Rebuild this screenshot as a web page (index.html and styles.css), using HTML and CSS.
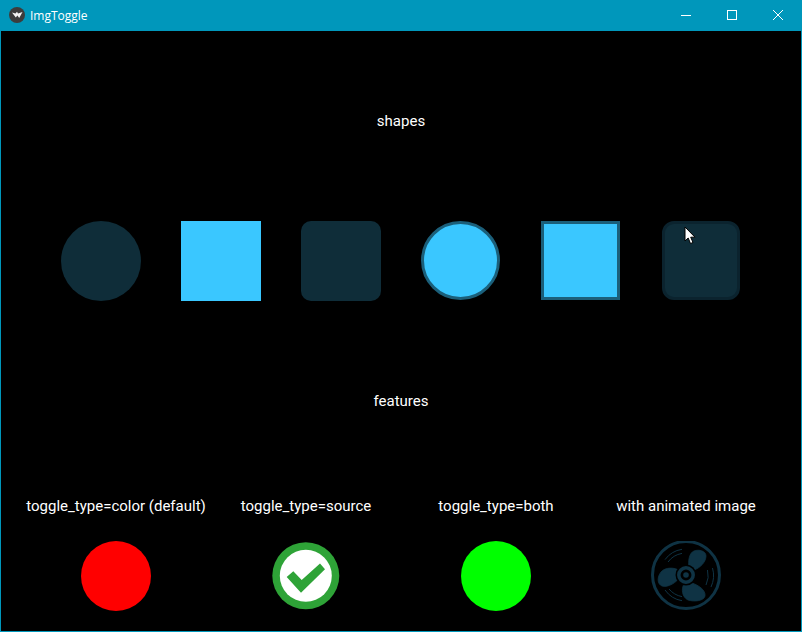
FILE: index.html
```html
<!DOCTYPE html>
<html lang="en">
<head>
<meta charset="utf-8">
<title>ImgToggle</title>
<link rel="stylesheet" href="styles.css">
</head>
<body>
<div class="window">
  <header class="titlebar">
    <svg class="app-icon" width="16" height="16" viewBox="0 0 16 16">
      <circle cx="8" cy="8" r="8" fill="#3c3c3c"/>
      <path d="M3 5.5 L6.5 6.5 L8 4.8 L9 6.4 L13.5 5 L10.2 11 L8.4 8.6 L6.8 10.6 Z" fill="#f4f4f4"/>
    </svg>
    <span class="title">ImgToggle</span>
    <div class="controls">
      <span class="ctl"><svg width="10" height="10" viewBox="0 0 10 10"><path d="M0 5.5H10" stroke="#fff" fill="none"/></svg></span>
      <span class="ctl"><svg width="10" height="10" viewBox="0 0 10 10"><rect x=".5" y=".5" width="9" height="9" stroke="#fff" fill="none"/></svg></span>
      <span class="ctl"><svg width="10" height="10" viewBox="0 0 10 10"><path d="M0 0L10 10M10 0L0 10" stroke="#fff" fill="none"/></svg></span>
    </div>
  </header>
  <main class="content">
    <div class="heading">shapes</div>
    <div class="shapes">
      <div class="shape off circle"></div>
      <div class="shape on"></div>
      <div class="shape off rounded"></div>
      <div class="shape on circle ring"></div>
      <div class="shape on ring"></div>
      <div class="shape off rounded ring-dark"></div>
    </div>
    <div class="heading">features</div>
    <div class="features">
      <div class="feature">
        <div class="feature-label">toggle_type=color (default)</div>
        <div class="feature-img"><div class="dot red"></div></div>
      </div>
      <div class="feature">
        <div class="feature-label">toggle_type=source</div>
        <div class="feature-img">
          <svg width="70" height="70" viewBox="0 0 70 70">
            <circle cx="34.800" cy="34.800" r="33.500" fill="#2ea337"/>
            <circle cx="34.800" cy="34.800" r="26" fill="#fff"/>
            <path d="M15.700 36 L22.300 30.300 L30.700 39 L49 22.500 L54 28.300 L30 51.700 Z" fill="#2ea337"/>
          </svg>
        </div>
      </div>
      <div class="feature">
        <div class="feature-label">toggle_type=both</div>
        <div class="feature-img"><div class="dot green"></div></div>
      </div>
      <div class="feature">
        <div class="feature-label">with animated image</div>
        <div class="feature-img">
          <svg width="70" height="70" viewBox="0 0 70 70">
            <circle cx="35" cy="34" r="33.500" fill="none" stroke="#0f3344" stroke-width="3"/>
            <g fill="#0f3344" stroke="#0f3344" stroke-width=".8">
              <path d="M38 27 C37 20 38 12 43 10 C48 8 55 10 55 15 C55 21 49 27 43 29 C41 29.500 38.500 29 38 27 Z"/>
              <path d="M29 30 C24 26 14 26 10 31 C6 36 6 43 11 45 C17 47 26 41 29 36 C30 34 30 32 29 30 Z"/>
              <path d="M33 43 C30 48 31 56 37 59 C43 61 53 60 54 55 C55 49 47 44 41 42 C37 41 34 41 33 43 Z"/>
            </g>
            <circle cx="35" cy="34" r="10.500" fill="#000"/>
            <circle cx="35" cy="34" r="7.200" fill="none" stroke="#0f3344" stroke-width="3.500"/>
            <circle cx="35" cy="34" r="2.800" fill="#0f3344"/>
            <g fill="none" stroke="#0f3344" stroke-width="1">
              <path d="M14 18.600 A26 26 0 0 1 31 8.300"/>
              <path d="M17 21 A22 22 0 0 1 31 12.400"/>
              <path d="M61.500 27 A27 27 0 0 1 60 46"/>
              <path d="M56.500 29 A22 22 0 0 1 55 44"/>
              <path d="M14 49 A26 26 0 0 0 31 59.700"/>
              <path d="M18 48 A22 22 0 0 0 31 55.600"/>
            </g>
          </svg>
        </div>
      </div>
    </div>
    <svg class="cursor" width="12" height="19" viewBox="0 0 12 19"><path d="M1 1V15L4.200 12L6.500 17.500L9 16.500L6.700 11.200H11Z" fill="#fff" stroke="#000"/></svg>
  </main>
</div>
</body>
</html>
```
FILE: styles.css
```css
* { box-sizing: border-box; }
html, body { margin: 0; height: 100%; background: #000; }
.window {
  width: 802px;
  height: 632px;
  border: 1px solid #0097bb;
  border-top: 0;
  display: flex;
  flex-direction: column;
  background: #000;
  color: #fff;
  font-family: Roboto, sans-serif;
  font-size: 15px;
}
.titlebar {
  height: 31px;
  flex: none;
  margin: 0 -1px;
  padding-left: 9px;
  padding-right: 1px;
  display: flex;
  align-items: center;
  background: #0097bb;
}
.app-icon { flex: none; margin-top: -2px; }
.title {
  margin-left: 5px;
  font-family: "Open Sans", sans-serif;
  font-size: 12px;
  margin-top: -1px;
}
.controls { margin-left: auto; display: flex; height: 100%; }
.ctl { width: 46px; display: flex; align-items: center; justify-content: center; margin-top: -2px; }
.ctl svg { display: block; }
.content { position: relative; flex: 1; display: flex; flex-direction: column; }
.heading { height: 180px; flex: none; display: flex; align-items: center; justify-content: center; }
.shapes { height: 100px; flex: none; display: flex; align-items: flex-start; justify-content: center; gap: 40px; padding-top: 10px; }
.shape { width: 80px; height: 80px; }
.on { background: #3ac7ff; }
.off { background: #0f2d39; }
.circle { border-radius: 50%; }
.rounded { border-radius: 10px; }
.ring { border: 3px solid #1b5f7a; width: 79px; height: 79px; margin-right: 1px; }
.ring-dark { border: 3px solid #0b232e; border-radius: 12px; width: 78px; height: 79px; margin: 0 1px; }
.features { flex: 1; display: flex; padding: 0 20px; }
.feature { flex: 1; display: flex; flex-direction: column; align-items: center; }
.feature-label { height: 30px; display: flex; align-items: center; justify-content: center; white-space: nowrap; }
.feature-img { flex: 1; display: flex; align-items: center; justify-content: center; }
.feature-img svg { display: block; }
.dot { width: 70px; height: 70px; border-radius: 50%; }
.red { background: #f00; }
.green { background: #0f0; }
.cursor { position: absolute; left: 683px; top: 195px; }
```
